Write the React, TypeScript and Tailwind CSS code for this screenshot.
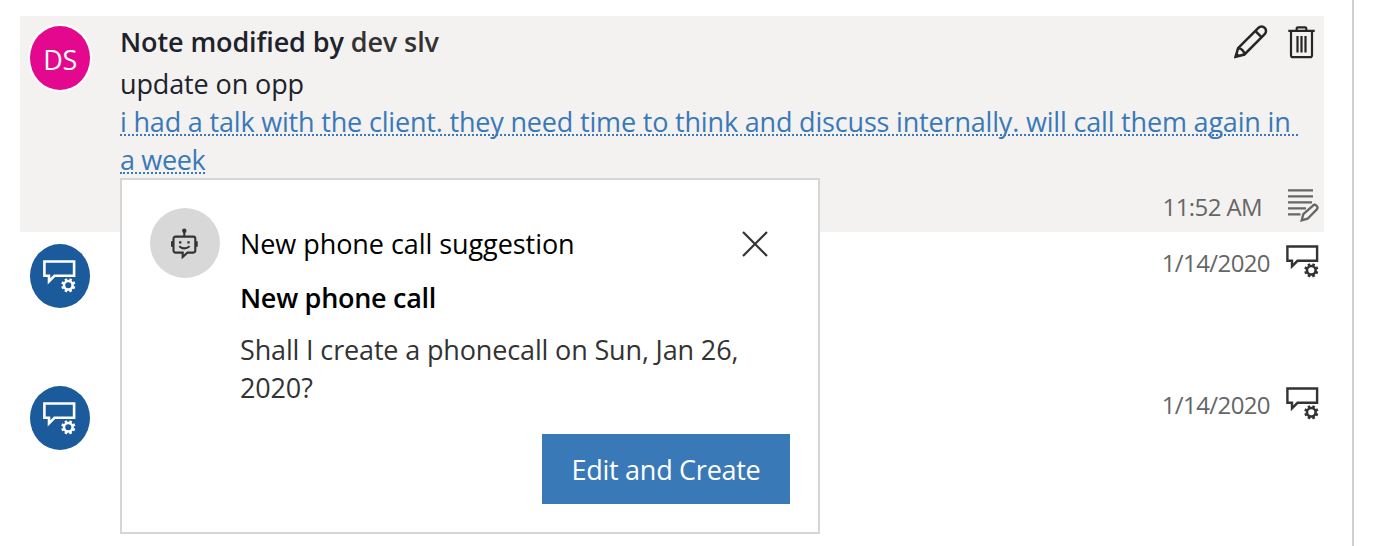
import React from "react";

function PencilIcon() {
  return (
    <svg width="34" height="34" viewBox="0 0 34 34" fill="none" stroke="#262626" strokeWidth="2.5">
      <path d="M1.600 31.700 4.100 23.200 24.400 2.900a4.400 4.400 0 0 1 6.300 6.300L10.400 29.500Z" />
      <path d="m21.400 6 6.300 6.300M4.100 23.200c3.200 0 6.300 2.800 6.300 6.300" />
      <path d="m1.600 31.700 1.200-4.200 3 3Z" fill="#262626" stroke="none" />
    </svg>
  );
}

function TrashIcon() {
  return (
    <svg width="28" height="34" viewBox="0 0 28 34" fill="none" stroke="#262626" strokeWidth="2.2">
      <path d="M.3 5.800h26.400M8.700 5.800V3.600c0-.8.500-1.300 1.300-1.300h7c.8 0 1.300.5 1.300 1.300v2.200M3 5.800v24.400c0 1.400.8 2 2 2h17c1.200 0 2-.6 2-2V5.800" />
      <path d="M9.500 11v16.500M13.500 11v16.500M17.500 11v16.500" />
    </svg>
  );
}

function NoteIcon() {
  return (
    <svg width="31" height="34" viewBox="0 0 31 34" fill="none" stroke="#666" strokeWidth="2.300">
      <path d="M0 2.400h25M0 8.400h25M0 14.400h24M0 20.400h18M0 26.300h12.500" />
      <path d="m13.700 32.300 1.600-6.200 9.400-8.300a2.700 2.700 0 0 1 3.900 3.800l-9 9.100Z" />
    </svg>
  );
}

// Speech bubble with a small gear in the lower right corner
function BubbleGearIcon({ color, strokeWidth }: { color: string; strokeWidth: number }) {
  return (
    <svg width="34" height="34" viewBox="0 0 34 34" fill="none" stroke={color} strokeWidth={strokeWidth}>
      <path d="M1.400 2.500h29.700V16.800H11.500L6 22.300V16.800H1.400Z" />
      <circle cx="25.300" cy="26.300" r="4.300" strokeWidth="2.500" />
      <g strokeWidth="2.700">
        <path d="M25.300 22v-2.800M25.300 30.600v2.800M21 26.300h-2.800M29.600 26.300h2.800" transform="rotate(22.500 25.300 26.300)" />
        <path d="M25.300 22v-2.800M25.300 30.600v2.800M21 26.300h-2.800M29.600 26.300h2.800" transform="rotate(67.500 25.300 26.300)" />
      </g>
    </svg>
  );
}

function BotIcon() {
  return (
    <svg width="28" height="32" viewBox="0 0 28 32" fill="none" stroke="#333" strokeWidth="2.100">
      <circle cx="13.300" cy="3.700" r="2.200" fill="#333" stroke="none" />
      <path d="M13.300 4v6" />
      <path d="M4.500 9.600h17.800a2 2 0 0 1 2 2v12a2 2 0 0 1-2 2H16.500L11.700 30v-4.400H4.500a2 2 0 0 1-2-2V11.600a2 2 0 0 1 2-2Z" />
      <path d="M1.200 14.200v5.500M25.500 14.200v5.500" strokeWidth="2.400" />
      <path d="M8.300 19.200q5 4.400 10.300 0" />
      <path d="M8 15.400h2.400M16.300 15.400h2.400" strokeWidth="2.400" />
    </svg>
  );
}

function CloseIcon() {
  return (
    <svg width="26" height="26" viewBox="0 0 26 26" stroke="#333" strokeWidth="2.200">
      <path d="m1 1 24 24M25 1 1 25" />
    </svg>
  );
}

function PostRow({ date }: { date: string }) {
  return (
    <div className="flex h-[142px] items-start justify-between pl-[10px] pt-3">
      <div className="flex h-16 w-[60px] items-center justify-center rounded-[50%] bg-[#1b5a9b]">
        <BubbleGearIcon color="#fff" strokeWidth={2.6} />
      </div>
      <div className="flex pr-[4px]">
        <span className="mr-4 text-[24px] leading-[38px] tracking-[-0.600px] text-[#666]">{date}</span>
        <BubbleGearIcon color="#333" strokeWidth={2.400} />
      </div>
    </div>
  );
}

function Suggestion() {
  return (
    <div className="absolute left-[100px] top-[162px] h-[356px] w-[700px] border-2 border-[#d6d6d6] bg-white px-7 pt-7 text-[27px]">
      <div className="flex h-[70px] items-center">
        <div className="flex h-[70px] w-[70px] items-center justify-center rounded-full bg-[#d8d8d8]">
          <BotIcon />
        </div>
        <h2 className="ml-5 flex-1 pt-[2px] tracking-[-0.060px] text-black">New phone call suggestion</h2>
        <button className="mr-[22px] pt-[2px]" aria-label="Close">
          <CloseIcon />
        </button>
      </div>
      <div className="ml-[90px] mt-[1px]">
        <h3 className="font-semibold leading-[38px] tracking-[-0.280px] text-black">New phone call</h3>
        <p className="mt-[14px] leading-[38px] tracking-[-0.150px] text-[#333]">
          Shall I create a phonecall on Sun, Jan 26,
          <br />
          2020?
        </p>
      </div>
      <div className="mt-[27px] flex justify-end">
        <button className="h-[70px] w-[248px] bg-[#3a79b7] pt-[2px] tracking-[-0.270px] text-white">
          Edit and Create
        </button>
      </div>
    </div>
  );
}

export default function App() {
  return (
    <div className="h-[546px] w-[1354px] overflow-hidden border-r-2 border-[#d2d0ce] bg-white pl-5 pt-4 font-['Open_Sans','Noto_Sans',sans-serif]">
      <div className="relative w-[1304px]">
        <div className="flex h-[216px] bg-[#f3f2f1] pl-[10px]">
          <div className="mt-[10px] flex h-16 w-[60px] items-center justify-center rounded-[50%] bg-[#e3088d] text-[27px] font-medium tracking-[-0.500px] text-white ring-2 ring-white">
            <span className="mt-1">DS</span>
          </div>
          <div className="ml-[30px] flex-1 text-[27px] leading-[38px] text-[#20222b]">
            <div className="flex h-[49px] justify-between pt-[9px]">
              <h1 className="-mt-[2px] font-semibold tracking-[-0.100px]">
                Note modified by <span className="text-[#333]">dev slv</span>
              </h1>
              <div className="flex gap-5 pr-2">
                <PencilIcon />
                <TrashIcon />
              </div>
            </div>
            <p className="tracking-[-0.120px]">update on opp</p>
            <a className="block whitespace-nowrap text-[#3a79b7]">
              <span className="block h-[38px]">
                <span className="inline-block h-[33px] w-[1178px] border-b-2 border-dotted border-[#3a79b7] tracking-[-0.180px]">
                  i had a talk with the client. they need time to think and discuss internally. will call them again in
                </span>
              </span>
              <span className="block h-[38px]">
                <span className="inline-block h-[33px] w-[85px] border-b-2 border-dotted border-[#3a79b7] tracking-[-0.350px]">
                  a week
                </span>
              </span>
            </a>
            <div className="flex justify-end pr-[5px] pt-[9px] text-[#666]">
              <span className="mr-[26px] text-[24px] tracking-[-0.600px]">11:52 AM</span>
              <NoteIcon />
            </div>
          </div>
        </div>
        <PostRow date="1/14/2020" />
        <PostRow date="1/14/2020" />
        <Suggestion />
      </div>
    </div>
  );
}
